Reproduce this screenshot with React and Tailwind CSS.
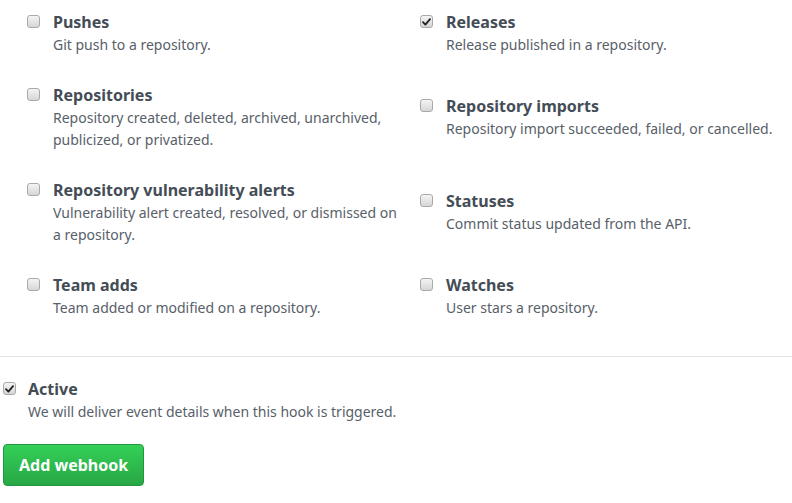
import React from 'react';

const events = [
  [
    { title: 'Pushes', desc: 'Git push to a repository.' },
    { title: 'Releases', desc: 'Release published in a repository.', checked: true },
  ],
  [
    { title: 'Repositories', desc: 'Repository created, deleted, archived, unarchived, publicized, or privatized.' },
    { title: 'Repository imports', desc: 'Repository import succeeded, failed, or cancelled.' },
  ],
  [
    { title: 'Repository vulnerability alerts', desc: 'Vulnerability alert created, resolved, or dismissed on a repository.' },
    { title: 'Statuses', desc: 'Commit status updated from the API.' },
  ],
  [
    { title: 'Team adds', desc: 'Team added or modified on a repository.' },
    { title: 'Watches', desc: 'User stars a repository.' },
  ],
];

const Checkbox = ({ checked }) => (
  <span className="mt-[5px] w-[13px] h-[13px] shrink-0 rounded-[3px] border border-[#a9a9a9] bg-gradient-to-b from-[#f4f4f4] to-[#d6d6d6] flex items-center justify-center">
    {checked && (
      <svg width="9" height="8" viewBox="0 0 9 8">
        <path d="M1 4.2 L3.4 6.6 L8 1.2" fill="none" stroke="#222" strokeWidth="1.8" strokeLinecap="round" strokeLinejoin="round" />
      </svg>
    )}
  </span>
);

const EventItem = ({ title, desc, checked }) => (
  <div className="flex items-start gap-[13px]">
    <Checkbox checked={checked} />
    <div className="max-w-[348px]">
      <div className="text-[16px] leading-[24px] font-bold text-[#444d56]">{title}</div>
      <p className="text-[14px] leading-[22px] text-[#586069]">{desc}</p>
    </div>
  </div>
);

const App = () => {
  return (
    <div className="w-[792px] h-[503px] bg-white overflow-hidden font-['Segoe_UI','Noto_Sans','Open_Sans',sans-serif]">
      <div className="grid grid-cols-[393px_372px] items-center gap-y-[27px] pl-[27px] pt-[10px]">
        {events.flat().map(e => (
          <EventItem key={e.title} {...e} />
        ))}
      </div>

      <div className="mt-[37px] border-t border-[#e1e4e8]" />

      <div className="pl-[3px] pt-[20px]">
        <div className="flex items-start gap-[12px]">
          <Checkbox checked />
          <div>
            <div className="text-[16px] leading-[24px] font-bold text-[#444d56]">Active</div>
            <p className="text-[14px] leading-[22px] text-[#586069]">We will deliver event details when this hook is triggered.</p>
          </div>
        </div>
        <button className="mt-[21px] h-[42px] px-[15px] rounded-[4px] border border-[#23963d] bg-gradient-to-b from-[#34d058] to-[#28a745] text-white text-[16px] font-bold">
          Add webhook
        </button>
      </div>
    </div>
  );
};

export default App;
